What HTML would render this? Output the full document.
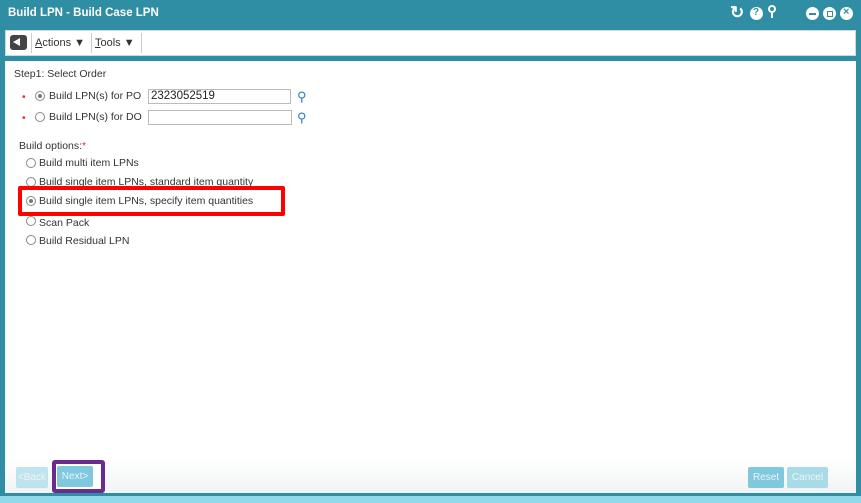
<!DOCTYPE html>
<html><head><meta charset="utf-8"><style>
*{margin:0;padding:0;box-sizing:border-box}
body{width:861px;height:503px;background:#2f8ea4;font-family:"Liberation Sans",sans-serif;position:relative;overflow:hidden;font-size:10.5px;color:#333}
.title{position:absolute;left:8px;top:7px;color:#fff;font-weight:bold;font-size:11.5px}
.tb{position:absolute;left:5px;top:30px;width:851px;height:26px;background:#fff;border:1px solid #cfd8dc}
.content{position:absolute;left:5px;top:61px;width:851px;height:432px;background:linear-gradient(#fff 92%,#f1f3f4);}
.bottom{position:absolute;left:0;top:496px;width:861px;height:7px;background:#8fd9ea}
.a{position:absolute;white-space:nowrap}
.rad{position:absolute;width:10px;height:10px;border-radius:50%;border:1px solid #888;background:#fff}
.rad.on::after{content:"";position:absolute;left:2px;top:2px;width:4px;height:4px;border-radius:50%;background:#777}
.inp{position:absolute;height:15px;border:1px solid #bbb;background:#fff;font-size:11.5px;padding-left:2px;line-height:13px;color:#222}
.star{color:#e03030;position:absolute}
.btn{position:absolute;height:21px;background:#a8dbe8;color:#e8f6fa;font-size:10px;line-height:21px;text-align:center;border-radius:2px}
.ic{position:absolute;top:7px;width:13px;height:13px;border-radius:50%;background:#fff}
</style></head><body>
<div class="title">Build LPN - Build Case LPN</div>
<div class="a" style="left:730px;top:3px;color:#fff;font-size:17px;font-weight:bold">&#8635;</div>
<div class="ic" style="left:750px"><span style="position:absolute;left:3px;top:0px;font-size:10px;color:#2f8ea4;font-weight:bold">?</span></div>
<div class="a" style="left:768px;top:5px;width:8px;height:8px;border:2px solid #fff;border-radius:50%"></div>
<div class="a" style="left:771px;top:13px;width:2px;height:5px;background:#fff"></div>
<div class="ic" style="left:806px"><span style="position:absolute;left:3px;top:5.5px;width:7px;height:2px;background:#2f8ea4"></span></div>
<div class="ic" style="left:823px"><span style="position:absolute;left:3.5px;top:3.5px;width:6px;height:6px;border:1.5px solid #2f8ea4"></span></div>
<div class="ic" style="left:840px"><span style="position:absolute;left:3px;top:-1px;font-size:11px;color:#2f8ea4;font-weight:bold">×</span></div>
<div class="tb">
 <div class="a" style="left:4px;top:4px;width:17px;height:15px;background:#444;border-radius:3px"><div style="position:absolute;left:3px;top:3px;border-right:7px solid #fff;border-top:4.5px solid transparent;border-bottom:4.5px solid transparent"></div></div>
 <div class="a" style="left:25px;top:2px;width:1px;height:20px;background:#ccc"></div>
 <div class="a" style="left:29px;top:6px;font-size:11px"><u>A</u>ctions &#9660;</div>
 <div class="a" style="left:85px;top:2px;width:1px;height:20px;background:#ccc"></div>
 <div class="a" style="left:89px;top:6px;font-size:11px"><u>T</u>ools &#9660;</div>
 <div class="a" style="left:135px;top:2px;width:1px;height:20px;background:#ccc"></div>
</div>
<div class="content">
 <div class="a" style="left:9px;top:7px">Step1: Select Order</div>
 <span class="star" style="left:17px;top:30px">•</span>
 <div class="rad on" style="left:30px;top:30px"></div>
 <div class="a" style="left:44px;top:29px">Build LPN(s) for PO</div>
 <div class="inp" style="left:143px;top:28px;width:143px">2323052519</div>
 <div class="a" style="left:292px;top:28px;color:#2a7fc0;font-size:13px">&#9906;</div>
 <span class="star" style="left:17px;top:51px">•</span>
 <div class="rad" style="left:30px;top:51px"></div>
 <div class="a" style="left:44px;top:50px">Build LPN(s) for DO</div>
 <div class="inp" style="left:143px;top:49px;width:144px"></div>
 <div class="a" style="left:292px;top:49px;color:#2a7fc0;font-size:13px">&#9906;</div>
 <div class="a" style="left:14px;top:79px">Build options:<span style="color:#e03030">*</span></div>
 <div class="rad" style="left:21px;top:97px"></div>
 <div class="a" style="left:34px;top:96px">Build multi item LPNs</div>
 <div class="rad" style="left:21px;top:116px"></div>
 <div class="a" style="left:34px;top:115px">Build single item LPNs, standard item quantity</div>
 <div class="rad" style="left:21px;top:155px"></div>
 <div class="a" style="left:13px;top:125px;width:267px;height:30px;border:4px solid #f00;background:#fff;border-radius:2px"></div>
 <div class="rad on" style="left:21px;top:135px"></div>
 <div class="a" style="left:34px;top:134px">Build single item LPNs, specify item quantities</div>
 <div class="a" style="left:34px;top:156px">Scan Pack</div>
 <div class="rad" style="left:21px;top:174px"></div>
 <div class="a" style="left:34px;top:174px">Build Residual LPN</div>
 <div class="btn" style="left:11px;top:406px;width:32px;opacity:.7">&lt;Back</div>
 <div class="a" style="left:47px;top:399px;width:53px;height:33px;border:4px solid #6a2a8f;border-radius:3px;background:#fff"></div>
 <div class="btn" style="left:52px;top:405px;width:36px;background:#7fc8de">Next&gt;</div>
 <div class="btn" style="left:743px;top:406px;width:36px;background:#7fc8de">Reset</div>
 <div class="btn" style="left:782px;top:406px;width:41px">Cancel</div>
</div>
<div class="bottom"></div>
</body></html>
